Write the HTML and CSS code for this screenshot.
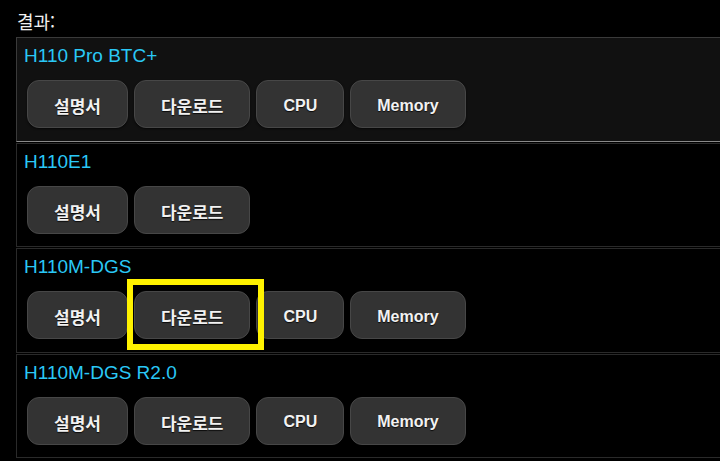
FILE: index.html
```html
<!DOCTYPE html>
<html lang="ko">
<head>
<meta charset="utf-8">
<title>결과</title>
<link rel="stylesheet" href="styles.css">
</head>
<body>
<div class="label">결과:</div>
<div class="list">
  <div class="card card-first">
    <div class="title">H110 Pro BTC+</div>
    <div class="buttons">
      <button class="btn ko">설명서</button>
      <button class="btn ko">다운로드</button>
      <button class="btn">CPU</button>
      <button class="btn">Memory</button>
    </div>
  </div>
  <div class="card">
    <div class="title">H110E1</div>
    <div class="buttons">
      <button class="btn ko">설명서</button>
      <button class="btn ko">다운로드</button>
    </div>
  </div>
  <div class="card">
    <div class="title">H110M-DGS</div>
    <div class="buttons">
      <button class="btn ko">설명서</button>
      <span class="mark"><button class="btn ko">다운로드</button><span class="highlight"></span></span>
      <button class="btn">CPU</button>
      <button class="btn">Memory</button>
    </div>
  </div>
  <div class="card">
    <div class="title">H110M-DGS R2.0</div>
    <div class="buttons">
      <button class="btn ko">설명서</button>
      <button class="btn ko">다운로드</button>
      <button class="btn">CPU</button>
      <button class="btn">Memory</button>
    </div>
  </div>
</div>
</body>
</html>
```
FILE: styles.css
```css
html, body {
  margin: 0;
  padding: 0;
  background: #000;
  overflow: hidden;
}
body {
  width: 720px;
  height: 461px;
  font-family: "Liberation Sans", "Noto Sans CJK KR", sans-serif;
  color: #eee;
}
.label {
  font-family: "Noto Sans CJK KR", sans-serif;
  font-size: 18px;
  line-height: 24px;
  height: 24px;
  padding: 9px 0 0 17px;
  color: #f0f0f0;
  margin-bottom: 4px;
}
.list {
  padding-left: 16px;
}
.card {
  width: 720px;
  box-sizing: border-box;
  border: 1px solid #2a2a2a;
  border-right: none;
  background: #000;
  padding: 6px 8px 12.5px 7px;
  margin-bottom: 1px;
}
.card-first {
  background: #111;
  border-color: #3a3a3a;
  border-bottom-color: #8a8a8a;
}
.title {
  font-size: 19px;
  line-height: 24px;
  color: #2ac8f6;
}
.buttons {
  display: flex;
  gap: 6px;
  margin-top: 12px;
  padding-left: 3px;
}
.btn {
  height: 48px;
  box-sizing: border-box;
  padding: 3px 26px 0 26px;
  border: 1px solid #474747;
  border-radius: 12px;
  background: #333;
  color: #f2f2f2;
  font-family: "Liberation Sans", "Noto Sans CJK KR", sans-serif;
  font-weight: bold;
  font-size: 16px;
  text-shadow: 0 1px 1px rgba(0,0,0,0.8);
  box-shadow: 0 1px 2px rgba(0,0,0,0.6);
}
.btn.ko {
  font-family: "Noto Sans CJK KR", sans-serif;
  font-size: 17px;
}
.mark {
  position: relative;
  display: flex;
}
.highlight {
  position: absolute;
  left: -7px;
  right: -14px;
  top: -12px;
  bottom: -11px;
  border: 6px solid #fff200;
  pointer-events: none;
}
```
